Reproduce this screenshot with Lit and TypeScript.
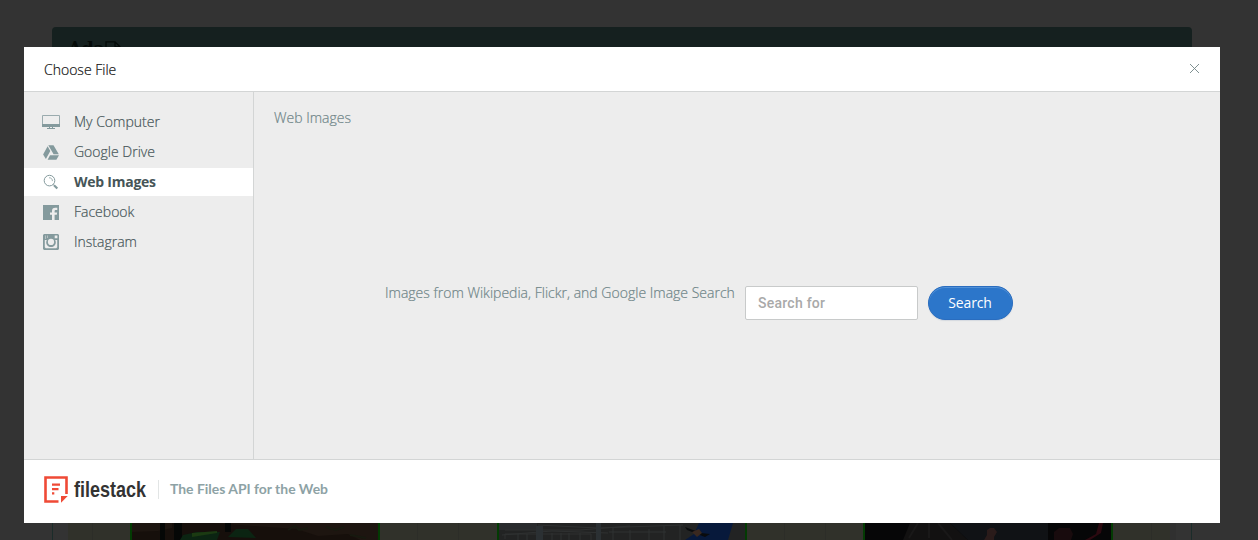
import { LitElement, html, css, svg } from "lit";
import { customElement, property, state } from "lit/decorators.js";
import { classMap } from "lit/directives/class-map.js";

const icons: Record<string, unknown> = {
  computer: svg`<g transform="translate(0 1)"><path d="M.5 1.500v10h17v-10z" fill="none" stroke="#9aabae"/><path d="M0 10h18v3H0zM7 13h1v1H7zM10 13h1v1h-1zM5 14h8v1H5z"/></g>`,
  drive: svg`<path transform="translate(0 .5)" d="M6.300 1.800h5.200l5.300 8.900h-5.200zM5.600 2.800l2.700 4.700-4.400 8L1.100 11zM8 11.700h9l-2.600 4.500H5.600z"/>`,
  search: svg`<g transform="translate(.5 .6)" fill="none" stroke="#849a9d"><circle cx="7" cy="7" r="5.300" stroke-width="1"/><path d="M6.500 4.200a3 3 0 0 1 3.400 3.300" stroke-width=".8"/><path d="M10.700 10.900l1.500 1.400" stroke-width="1"/><path d="M11.500 11.700l3.300 3.200" stroke-width="2.200"/></g>`,
  facebook: svg`<path transform="translate(0 1)" fill-rule="evenodd" d="M1 1h16v15H1zM10 16h2.600v-5.200h2.200l.3-2.300h-2.500V7.200c0-.8.400-1.200 1.200-1.200h1.500V3.700h-2.100C11.100 3.700 10 4.900 10 6.900v1.600H8v2.300h2z"/>`,
  instagram: svg`<path fill-rule="evenodd" d="M2 1h14l1 1v14l-1 1H2l-1-1V2zM2.800 7v7.300l.9.900h10.600l.9-.900V7h-2a4.800 4.800 0 1 1-8.400 0zM12.700 2.500v2.700h2.700V2.500z"/><circle cx="9" cy="8.900" r="3.100" fill="#ededed"/><path d="M3 2.600h1V6H3zM5 2.600h1V5H5z" fill="#b5c0c2"/>`,
};

@customElement("source-item")
class SourceItem extends LitElement {
  @property() icon = "";
  @property() label = "";
  @property({ type: Boolean }) active = false;

  static styles = css`
    :host { display: block; }
    .row { box-sizing: border-box; height: 28px; margin-bottom: 2px; padding-left: 18px; display: flex; align-items: center; color: #465558; font: 300 14px/28px "Open Sans", sans-serif; -webkit-text-stroke: 0.2px; cursor: pointer; }
    .active { background: #fff; font-weight: 700; letter-spacing: -0.25px; -webkit-text-stroke: 0; }
    svg { width: 18px; height: 18px; margin-right: 14px; fill: #849a9d; flex: none; }
  `;

  render() {
    return html`<div class=${classMap({ row: true, active: this.active })}>
      <svg viewBox="0 0 18 18">${icons[this.icon]}</svg><span>${this.label}</span>
    </div>`;
  }
}

const sources = [
  ["computer", "My Computer"],
  ["drive", "Google Drive"],
  ["search", "Web Images"],
  ["facebook", "Facebook"],
  ["instagram", "Instagram"],
];

@customElement("app-root")
class AppRoot extends LitElement {
  @state() private selected = "Web Images";

  static styles = css`
    :host { display: block; position: relative; width: 1258px; height: 540px; overflow: hidden; background: #333; font-family: "Open Sans", sans-serif; font-weight: 300; font-size: 14px; }
    * { box-sizing: border-box; }
    .page { display: flex; flex-direction: column; width: 1140px; height: 540px; margin-left: 52px; padding-top: 27px; }
    .bar { height: 56px; background: #15201f; border-radius: 4px 4px 0 0; padding: 12px 16px; display: flex; align-items: flex-start; color: #040a08; font: 700 18px/20px "DejaVu Serif", serif; letter-spacing: -0.6px; }
    .bar svg { width: 18px; height: 20px; }
    .content { flex: 1; display: flex; justify-content: center; align-items: flex-end; border: solid #1b2c2a; border-width: 0 1px; }
    .strip { width: 1108px; height: 17px; display: block; }
    .modal { position: absolute; left: 24px; top: 47px; width: 1196px; height: 476px; display: flex; flex-direction: column; background: #fff; }
    .head { height: 45px; padding: 0 20px; display: flex; align-items: center; justify-content: space-between; border-bottom: 1px solid #d3d5d5; color: #111; -webkit-text-stroke: 0.2px; }
    .head svg { width: 11px; height: 11px; margin-bottom: 2px; }
    .body { height: 368px; display: flex; background: #ededed; }
    .side { width: 230px; border-right: 1px solid #d3d5d5; padding-top: 16px; }
    .main { flex: 1; display: flex; flex-direction: column; padding: 16px 20px 0; color: #6f8588; -webkit-text-stroke: 0.2px; }
    .crumb { line-height: 20px; }
    .form { display: flex; margin: 158px 0 0 111px; }
    .caption { width: 350px; white-space: nowrap; line-height: 14px; margin-right: 10px; letter-spacing: 0.01px; }
    .field { width: 173px; height: 34px; border: 1px solid #c8caca; border-radius: 2px; background: #fff; padding: 0 11px 1px 12px; font: 500 14px Roboto, sans-serif; color: #555; letter-spacing: 0.25px; outline: 0; -webkit-text-stroke: 0; }
    .field::placeholder { color: #a9a9a9; opacity: 1; }
    .go { width: 85px; height: 34px; margin-left: 10px; border: 1px solid #2a6dbf; border-radius: 17px; background: #2c76ca; box-shadow: inset 0 1px #5090d7, 0 1px 1px #d4d9df; color: #fff; font: 400 14px "Open Sans", sans-serif; letter-spacing: -0.15px; padding: 0 1px 2px 0; -webkit-text-stroke: 0; }
    .foot { height: 63px; border-top: 1px solid #d3d5d5; display: flex; align-items: flex-start; padding: 16px 20px 0; margin-top: -1px; background: #fff; }
    .mark { width: 24px; height: 27px; margin-right: 6px; }
    .brand { width: 72px; height: 27px; overflow: visible; }
    .brand text { font: 700 22px "Liberation Sans Narrow", "Liberation Sans", sans-serif; fill: #333; }
    .tag { margin: 4px 0 0 12px; padding-left: 11px; height: 19px; border-left: 1px solid #e2e5e5; color: #8da2a5; }
    .tag svg { width: 158px; height: 19px; display: block; overflow: visible; }
    .tag text { font: 700 13px Lato, sans-serif; fill: #8da2a5; }
  `;

  private strip() {
    return svg`
      <rect width="1108" height="17" fill="#30312a"/>
      ${[24, 349, 390, 716, 757, 1083].map((x) => svg`<rect x=${x} width="1" height="17" fill="#2c2d28"/>`)}
      <rect x="62" width="250" height="17" fill="#033b03"/>
      <rect x="64" width="246" height="17" fill="#160f0b"/>
      <path d="M64 0h40v5L90 8 64 9zM145 0h165v17h-18l-12-6-30 2-22-7-28-2z" fill="#1d1510"/>
      <path d="M92 0h5v17h-5zM106 0h8v17h-8zM157 0h6v9h-6z" fill="#050706"/>
      <path d="M112 17l3-5 14-3 23 0-3 8zM160 14l8-8 12 0 8 9z" fill="#0b2412"/>
      <path d="M124 10l25-2v2l-25 4z" fill="#1b3a12"/>
      <path d="M220 7l7-4 4 4 9-2M258 4l10 3 8-3M282 12l16 3" stroke="#17190f" stroke-width="2" fill="none"/>
      <rect x="429" width="250" height="17" fill="#033b03"/>
      <rect x="431" width="246" height="17" fill="#222323"/>
      <path d="M431 0h38v7h-38z" fill="#292b2d"/>
      <path d="M434 12l50-4 56 2M437 7h75l50-4M470 2l60 3 85-3M437 16v-5h86v6" stroke="#2f3131" fill="none"/>
      <path d="M450 11v6M459 11v6M484 10v7M493 10v7M501 10v7M512 10v7M545 4v13M562 7v10M581 6v11M596 3v14M612 2v15M541 9h57" stroke="#2f3232" fill="none"/>
      <path d="M468 3h7v14h-7zM528 0h5v17h-5z" fill="#2b3033"/>
      <path d="M617 17l9-6 5-11h34l-5 17z" fill="#07193b"/>
      <path d="M617 4l16 6 9 1-5 3-18-7z" fill="#090b0d"/><path d="M624 9l7-3 3 4-5 4z" fill="#39281f"/>
      <rect x="795" width="250" height="17" fill="#033b03"/>
      <rect x="797" width="246" height="17" fill="#060607"/>
      <path d="M842 0h40l18 17h-65z" fill="#121111"/><path d="M850 0l-9 15M861 0v15M870 0l14 17" stroke="#191818" stroke-width="2" fill="none"/>
      <path d="M882 0h98v17h-80z" fill="#101215"/><path d="M916 17l3-5 0-5 3-2h4l3 4-3 5v3z" fill="#2a1b1a"/>
      <path d="M986 17V9l5-4h11l3 6-2 6z" fill="#180b0d"/><path d="M1017 17l11-6 3-11h4l-2 10-11 7z" fill="#2b0910"/>
      <rect x="1102" y="0" width="6" height="17" fill="#303030"/>`;
  }

  render() {
    return html`
      <div class="page">
        <div class="bar"><span>Ada</span>
          <svg viewBox="0 0 18 20" fill="none" stroke="#040a08" stroke-width="1.300"><path d="M2 18V2.800h9l5 5V18M11 3v5h5"/></svg>
        </div>
        <div class="content"><svg class="strip" viewBox="0 0 1108 17">${this.strip()}</svg></div>
      </div>
      <div class="modal">
        <div class="head"><span>Choose File</span>
          <svg viewBox="0 0 11 11"><path d="M1 1l9 9M10 1l-9 9" stroke="#728486" stroke-width=".9"/></svg>
        </div>
        <div class="body">
          <div class="side">
            ${sources.map(([icon, label]) => html`<source-item .icon=${icon} .label=${label} ?active=${label === this.selected} @click=${() => (this.selected = label)}></source-item>`)}
          </div>
          <div class="main">
            <div class="crumb">${this.selected}</div>
            <div class="form">
              <div class="caption">Images from Wikipedia, Flickr, and Google Image Search</div>
              <input class="field" placeholder="Search for" />
              <button class="go">Search</button>
            </div>
          </div>
        </div>
        <div class="foot">
          <svg class="mark" viewBox="0 0 24 27">
            <path d="M14.500 25.500h-13v-24h21V18" fill="none" stroke="#ef4a36" stroke-width="2.600"/>
            <path d="M17 20h6.700L17 26.700z" fill="#ef4a36"/>
            <path d="M8 7.500h8v2.200H8zM8 12h6.500v2.200H8zM8 16.200h2.300v2.200H8z" fill="#ef4a36"/>
          </svg>
          <svg class="brand"><text x="0" y="21" textLength="72" lengthAdjust="spacingAndGlyphs">filestack</text></svg>
          <div class="tag"><svg><text x="0" y="14" textLength="158" lengthAdjust="spacingAndGlyphs">The Files API for the Web</text></svg></div>
        </div>
      </div>`;
  }
}
